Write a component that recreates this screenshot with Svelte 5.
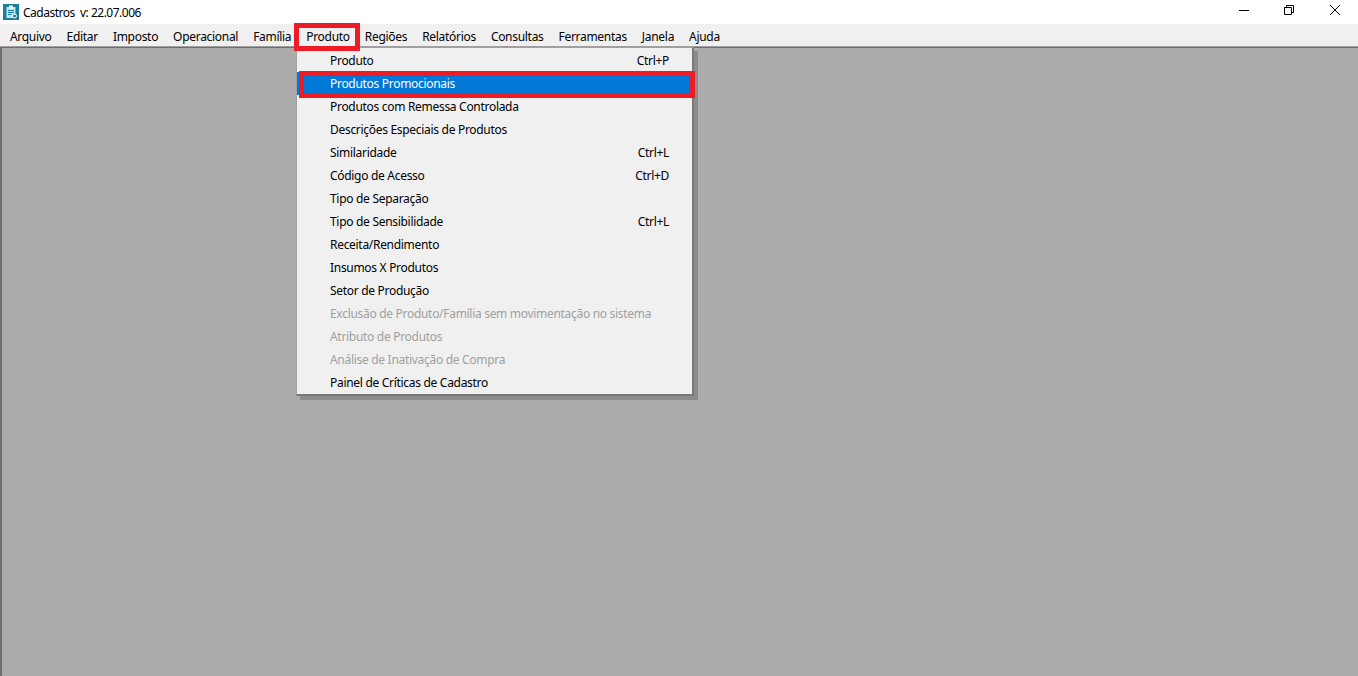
<script lang="ts">
  const menus = ['Arquivo', 'Editar', 'Imposto', 'Operacional', 'Família', 'Produto', 'Regiões', 'Relatórios', 'Consultas', 'Ferramentas', 'Janela', 'Ajuda'];

  const items = [
    { label: 'Produto', key: 'Ctrl+P' },
    { label: 'Produtos Promocionais', active: true },
    { label: 'Produtos com Remessa Controlada' },
    { label: 'Descrições Especiais de Produtos' },
    { label: 'Similaridade', key: 'Ctrl+L' },
    { label: 'Código de Acesso', key: 'Ctrl+D' },
    { label: 'Tipo de Separação' },
    { label: 'Tipo de Sensibilidade', key: 'Ctrl+L' },
    { label: 'Receita/Rendimento' },
    { label: 'Insumos X Produtos' },
    { label: 'Setor de Produção' },
    { label: 'Exclusão de Produto/Família sem movimentação no sistema', disabled: true },
    { label: 'Atributo de Produtos', disabled: true },
    { label: 'Análise de Inativação de Compra', disabled: true },
    { label: 'Painel de Críticas de Cadastro' }
  ];
</script>

<div class="window">
  <header class="titlebar">
    <svg class="app-icon" width="16" height="16" viewBox="0 0 16 16">
      <rect width="16" height="16" fill="#1b7f9c" />
      <path d="M3.5 3h9v11h-9z" fill="#c4e4ec" />
      <rect x="6" y="1.5" width="4" height="3" fill="#fff" />
      <path d="M5 6.5h6M5 8.5h6M5 10.5h3.5" stroke="#1b7f9c" />
      <circle cx="11.5" cy="12" r="2" fill="#1b7f9c" stroke="#fff" />
    </svg>
    <span class="title">Cadastros&nbsp; v: 22.07.006</span>
    <div class="controls">
      <svg width="16" height="16" viewBox="0 0 16 16"><path d="M4 8.5h10" stroke="#000" fill="none" /></svg>
      <svg width="16" height="16" viewBox="0 0 16 16"><path d="M3.5 5.5h7v7h-7zM5.5 5.5v-2h7v7h-2" stroke="#000" fill="none" /></svg>
      <svg width="16" height="16" viewBox="0 0 16 16"><path d="M3 3l10 10M13 3l-10 10" stroke="#000" fill="none" /></svg>
    </div>
  </header>

  <nav class="menubar">
    {#each menus as menu}
      <span class="menu" class:open={menu === 'Produto'}>{menu}</span>
    {/each}
  </nav>

  <main class="workspace">
    <div class="dropdown">
      {#each items as item}
        <div class="item" class:active={item.active} class:disabled={item.disabled}>
          <span>{item.label}</span>
          {#if item.key}<span class="key">{item.key}</span>{/if}
        </div>
      {/each}
    </div>
  </main>
</div>

<style>
  :global(body) { margin: 0; }
  .window { height: 676px; display: flex; flex-direction: column; overflow: hidden; font-family: "Noto Sans", sans-serif; font-size: 12px; letter-spacing: -0.3px; color: #000; background: #fff; }

  .titlebar { height: 24px; display: flex; align-items: center; padding-left: 3px; gap: 4px; flex: none; }
  .title { letter-spacing: -0.5px; }
  .controls { margin-left: auto; align-self: flex-start; display: flex; gap: 30px; padding: 2px 15px 0 0; }

  .menubar { height: 23px; box-sizing: border-box; display: flex; padding-left: 2.5px; background: #f0f0f0; border-bottom: 1px solid #a0a0a0; flex: none; position: relative; z-index: 2; }
  .menu { padding: 1px 7.5px 0; line-height: 23px; position: relative; }
  .menu.open::after { content: ''; position: absolute; left: -4.5px; top: -1px; width: 56px; height: 18px; border: 5px solid #ed1c24; }

  /* the MDI client area is a fine grey checker */
  .workspace { flex: 1; position: relative; background: repeating-conic-gradient(#a9a9a9 0 25%, #adadad 0 50%) 0 0 / 2px 2px; border-top: 1px solid #6e6e6e; border-left: 2px solid #6e6e6e; }

  .dropdown { position: absolute; left: 294px; top: -1px; width: 395px; padding-top: 1px; background: #f0f0f0; border: 1px solid #a0a0a0; border-right: 2px solid #7a7a7a; border-bottom: 2px solid #7a7a7a; box-shadow: 4px 4px 0 #8c8c8c; }
  .item { height: 23px; display: flex; align-items: center; justify-content: space-between; padding: 0 23px 0 33px; box-sizing: border-box; position: relative; }
  .item.active { color: #fff; background: #0078d7; padding: 0; }
  .item.active span { padding-left: 33px; }
  .item.active::after { content: ''; position: absolute; left: 2px; right: -3px; top: -1px; bottom: -3px; border: 5px solid #ed1c24; }
  .item.disabled { color: #a0a0a0; }
</style>
